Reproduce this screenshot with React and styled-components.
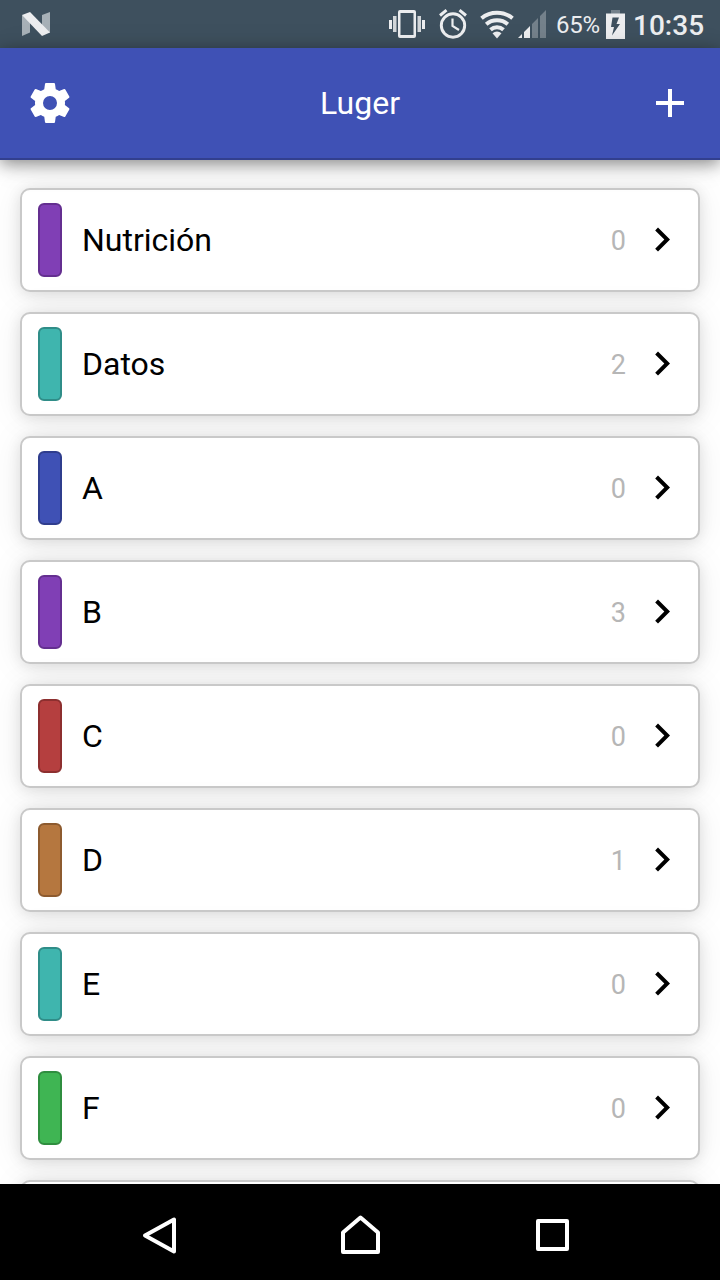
import React from "react";
import styled, { createGlobalStyle } from "styled-components";

const GlobalStyle = createGlobalStyle`
  * { box-sizing: border-box; }
  body { margin: 0; background: #fff; font-family: Roboto, "Liberation Sans", sans-serif; }
`;

const Screen = styled.div`
  display: flex;
  flex-direction: column;
  width: 720px;
  height: 1280px;
  overflow: hidden;
  background: #fff;
`;

const StatusBar = styled.div`
  flex: none;
  display: flex;
  align-items: center;
  height: 48px;
  padding: 0 17px 0 22px;
  background: #3e505e;
  color: #ecedef;
`;

const StatusIcons = styled.div`
  display: flex;
  align-items: center;
  margin-left: auto;
`;

const StatusIcon = styled.svg`
  flex: none;
  display: block;
  margin-left: ${(p) => p.$gap || 0}px;
`;

const Percent = styled.span`
  margin-left: 10px;
  width: 43px;
  font-size: 24px;
  line-height: 48px;
  letter-spacing: -0.3px;
  padding-top: 2px;
`;

const Clock = styled.span`
  margin-left: 8px;
  width: 70px;
  font-size: 28px;
  font-weight: 500;
  line-height: 48px;
  padding-top: 3px;
`;

const Header = styled.header`
  position: relative;
  z-index: 1;
  flex: none;
  display: flex;
  align-items: center;
  justify-content: space-between;
  height: 112px;
  padding: 0 26px;
  background: #3f51b5;
  border-bottom: 2px solid #323f8e;
  box-shadow: 0 4px 16px rgba(0, 0, 0, 0.45), 0 4px 40px rgba(0, 0, 0, 0.05);
  color: #fff;
`;

const Title = styled.h1`
  margin: 0;
  font-size: 32px;
  font-weight: 400;
  line-height: 40px;
`;

const HeaderButton = styled.button`
  display: block;
  width: 48px;
  height: 48px;
  padding: 0;
  border: 0;
  background: none;
  color: inherit;
`;

const Icon = styled.svg`
  display: block;
  flex: none;
  width: 48px;
  height: 48px;
  fill: currentColor;
`;

const List = styled.main`
  flex: 1;
  min-height: 0;
  overflow: hidden;
  display: flex;
  flex-direction: column;
  gap: 20px;
  padding: 28px 20px 0;
`;

const Card = styled.div`
  flex: none;
  display: flex;
  align-items: center;
  height: 104px;
  padding: 0 12px 0 16px;
  border: 2px solid #c9c9c9;
  border-radius: 10px;
  background: #fff;
  box-shadow: 0 2px 14px rgba(0, 0, 0, 0.1), 0 2px 34px rgba(0, 0, 0, 0.08);
  color: #000;
`;

const Marker = styled.span`
  width: 24px;
  height: 74px;
  border: 2px solid ${(p) => p.$edge};
  border-radius: 6px;
  background: ${(p) => p.$fill};
`;

const Name = styled.span`
  flex: 1;
  margin-left: 20px;
  font-size: 32px;
  line-height: 40px;
`;

const Count = styled.span`
  margin-right: 12px;
  padding-top: 1px;
  font-size: 27px;
  line-height: 40px;
  color: #b6b6b6;
`;

const NavBar = styled.nav`
  position: relative;
  z-index: 1;
  flex: none;
  display: flex;
  align-items: center;
  justify-content: space-between;
  height: 96px;
  padding: 8px 144px 0 136px;
  background: #000;
`;

const NavIcon = styled.svg`
  display: block;
  width: 48px;
  height: 48px;
  fill: none;
  stroke: #fff;
  stroke-width: 4;
  stroke-linejoin: round;
`;

const colors = {
  purple: ["#803fb5", "#642f90"],
  teal: ["#3fb5ae", "#2f8d88"],
  indigo: ["#3f51b5", "#2f3d8d"],
  red: ["#b53f3f", "#8d2f2f"],
  brown: ["#b5773f", "#8d5b2f"],
  green: ["#3fb553", "#2f8d3f"],
};

const rows = [
  ["Nutrición", 0, "purple"],
  ["Datos", 2, "teal"],
  ["A", 0, "indigo"],
  ["B", 3, "purple"],
  ["C", 0, "red"],
  ["D", 1, "brown"],
  ["E", 0, "teal"],
  ["F", 0, "green"],
];

function Status() {
  return (
    <StatusBar>
      <StatusIcon width="28" height="24" viewBox="0 0 28 24">
        <path d="M0 3v21l8-3.500V8zM20 3l8-3v21l-8-6z" fill="#a7b0b7" />
        <path d="M0 3l8-3 20 20.500L20 24z" fill="#ecedef" />
      </StatusIcon>
      <StatusIcons>
        <StatusIcon width="36" height="28" viewBox="0 0 36 28" fill="currentColor">
          <path fillRule="evenodd" d="M11 0h14a2 2 0 0 1 2 2v24a2 2 0 0 1-2 2H11a2 2 0 0 1-2-2V2a2 2 0 0 1 2-2zM11.500 3v22h13V3z" />
          <path d="M0 10h3v9H0zM33 10h3v9h-3z" />
          <path d="M4 6h3.500v16H4zM28.500 6H32v16h-3.500z" opacity=".85" />
        </StatusIcon>
        <StatusIcon $gap={14} width="28" height="30" viewBox="0 0 28 30" fill="none" stroke="currentColor">
          <circle cx="14" cy="16.500" r="11.700" strokeWidth="2.900" />
          <path d="M1 6.500L7.500 1.200M27 6.500L20.500 1.200" strokeWidth="3" />
          <path d="M13.500 9.500v7.500l6.500 4" strokeWidth="2.200" />
        </StatusIcon>
        <StatusIcon $gap={13} width="34" height="29" viewBox="0 0 34 29" fill="none" stroke="currentColor" strokeWidth="4">
          <path d="M1.500 8.200a24.500 24.500 0 0 1 31 0" />
          <path d="M6.200 14.200a17 17 0 0 1 21.600 0" />
          <path d="M10.500 19.700a10 10 0 0 1 13 0" />
          <path d="M17 28.500l-4.500-5.300a7 7 0 0 1 9 0z" fill="currentColor" stroke="none" />
        </StatusIcon>
        <StatusIcon $gap={4} width="28" height="28" viewBox="0 0 28 28">
          <path d="M0 28l4-4v4zM6 22l6-6v12H6z" fill="#ecedef" />
          <path d="M14 14l6-6v20h-6zM22 6l6-6v28h-6z" fill="#74818b" />
        </StatusIcon>
        <Percent>65%</Percent>
        <StatusIcon $gap={7} width="19" height="29" viewBox="0 0 19 29">
          <path d="M5 0h9v4H5z" fill="#74818b" />
          <path d="M0 3.500h19V29H0z" fill="#ecedef" />
          <path d="M6.500 7.500H13L10.500 14H14L6 25.500 8 17H5z" fill="#3e505e" />
        </StatusIcon>
        <Clock>10:35</Clock>
      </StatusIcons>
    </StatusBar>
  );
}

export default function App() {
  return (
    <Screen>
      <GlobalStyle />
      <Status />
      <Header>
        <HeaderButton aria-label="Settings">
          <Icon viewBox="0 0 24 24">
            <path d="M19.430 12.980c.04-.32.07-.64.07-.98s-.03-.66-.07-.98l2.110-1.650c.19-.15.24-.42.12-.64l-2-3.460c-.12-.22-.39-.3-.61-.22l-2.490 1c-.52-.4-1.080-.73-1.690-.98l-.38-2.650C14.460 2.180 14.250 2 14 2h-4c-.25 0-.46.18-.49.42l-.38 2.650c-.61.25-1.170.59-1.690.98l-2.490-1c-.23-.09-.49 0-.61.22l-2 3.460c-.13.22-.07.49.12.64l2.110 1.650c-.04.32-.07.65-.07.98s.03.66.07.98l-2.110 1.650c-.19.15-.24.42-.12.64l2 3.460c.12.22.39.3.61.22l2.490-1c.52.4 1.080.73 1.690.98l.38 2.650c.03.24.24.42.49.42h4c.25 0 .46-.18.49-.42l.38-2.650c.61-.25 1.170-.59 1.690-.98l2.490 1c.23.09.49 0 .61-.22l2-3.460c.12-.22.07-.49-.12-.64zM12 15.500a3.500 3.500 0 1 1 0-7 3.500 3.500 0 0 1 0 7z" />
          </Icon>
        </HeaderButton>
        <Title>Luger</Title>
        <HeaderButton aria-label="Add">
          <Icon viewBox="0 0 24 24">
            <path d="M19 13h-6v6h-2v-6H5v-2h6V5h2v6h6z" />
          </Icon>
        </HeaderButton>
      </Header>
      <List>
        {rows.map(([name, count, color]) => (
          <Card key={name}>
            <Marker $fill={colors[color][0]} $edge={colors[color][1]} />
            <Name>{name}</Name>
            <Count>{count}</Count>
            <Icon viewBox="0 0 24 24">
              <path d="M10 5.800L8.590 7.210 13.170 11.800l-4.580 4.590L10 17.800l6-6z" />
            </Icon>
          </Card>
        ))}
        <Card />
      </List>
      <NavBar>
        <NavIcon viewBox="0 0 48 48">
          <path d="M38 7.500v32L9 23.500z" />
        </NavIcon>
        <NavIcon viewBox="0 0 48 48">
          <path d="M11 40V20.500L28.500 5.500 46 20.500V40z" />
        </NavIcon>
        <NavIcon viewBox="0 0 48 48">
          <path d="M10 9h29v28H10z" />
        </NavIcon>
      </NavBar>
    </Screen>
  );
}
